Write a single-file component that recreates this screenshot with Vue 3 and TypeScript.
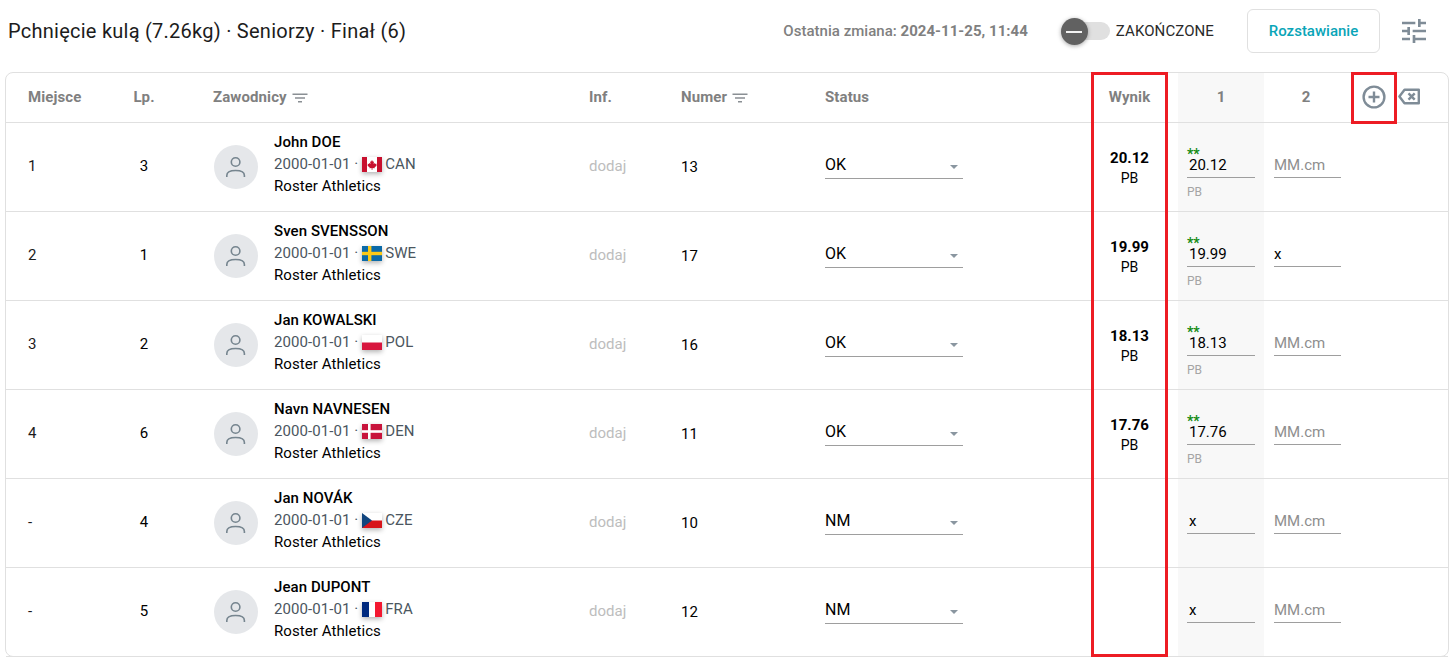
<script setup lang="ts">
interface Row {
  place: string; lp: number; first: string; last: string; flag: string; country: string;
  num: number; status: string; result: string; a1: string; stars: boolean; a2: string;
}
const rows: Row[] = [
  { place: '1', lp: 3, first: 'John', last: 'DOE', flag: 'can', country: 'CAN', num: 13, status: 'OK', result: '20.12', a1: '20.12', stars: true, a2: '' },
  { place: '2', lp: 1, first: 'Sven', last: 'SVENSSON', flag: 'swe', country: 'SWE', num: 17, status: 'OK', result: '19.99', a1: '19.99', stars: true, a2: 'x' },
  { place: '3', lp: 2, first: 'Jan', last: 'KOWALSKI', flag: 'pol', country: 'POL', num: 16, status: 'OK', result: '18.13', a1: '18.13', stars: true, a2: '' },
  { place: '4', lp: 6, first: 'Navn', last: 'NAVNESEN', flag: 'den', country: 'DEN', num: 11, status: 'OK', result: '17.76', a1: '17.76', stars: true, a2: '' },
  { place: '-', lp: 4, first: 'Jan', last: 'NOVÁK', flag: 'cze', country: 'CZE', num: 10, status: 'NM', result: '', a1: 'x', stars: false, a2: '' },
  { place: '-', lp: 5, first: 'Jean', last: 'DUPONT', flag: 'fra', country: 'FRA', num: 12, status: 'NM', result: '', a1: 'x', stars: false, a2: '' },
];
</script>

<template>
  <div class="page">
    <header class="top">
      <h1 class="title">Pchnięcie kulą (7.26kg) · Seniorzy · Finał (6)</h1>
      <div class="changed">Ostatnia zmiana: <b>2024-11-25, 11:44</b></div>
      <div class="toggle">
        <span class="track"></span>
        <span class="knob"><span class="minus"></span></span>
      </div>
      <span class="toggle-label">ZAKOŃCZONE</span>
      <button class="seed" type="button">Rozstawianie</button>
      <svg class="tune" viewBox="0 0 24 24" width="32" height="32" fill="#7f8c97">
        <path d="M3 17v2h6v-2H3zM3 5v2h10V5H3zm10 16v-2h8v-2h-8v-2h-2v6h2zM7 9v2H3v2h4v2h2V9H7zm14 4v-2H11v2h10zm-6-4h2V7h4V5h-4V3h-2v6z" />
      </svg>
    </header>

    <section class="card">
      <div class="row head">
        <div class="c-place">Miejsce</div>
        <div class="c-lp">Lp.</div>
        <div class="c-ath">
          <span>Zawodnicy</span>
          <svg class="filter" viewBox="0 0 16 10" width="16" height="10" fill="none" stroke="#8a8f94" stroke-width="1.4"><path d="M0.5 1.2h15M3 5h10M6 8.8h4" /></svg>
        </div>
        <div class="c-inf">Inf.</div>
        <div class="c-num">
          <span>Numer</span>
          <svg class="filter" viewBox="0 0 16 10" width="16" height="10" fill="none" stroke="#8a8f94" stroke-width="1.4"><path d="M0.5 1.2h15M3 5h10M6 8.8h4" /></svg>
        </div>
        <div class="c-status">Status</div>
        <div class="c-res">Wynik</div>
        <div class="c-gap"></div>
        <div class="c-try shade">1</div>
        <div class="c-try two">2</div>
        <div class="c-act">
          <svg class="plus" viewBox="0 0 24 24" width="24" height="24" fill="none" stroke="#7f8c97" stroke-width="2.4"><circle cx="12" cy="12" r="10.4" /><path d="M12 6.5v11M6.5 12h11" /></svg>
          <svg class="erase" viewBox="0 0 22 16" width="22" height="17" fill="none" stroke="#7f8c97" stroke-width="2.4"><path d="M6.5 1.2H20.8V14.8H6.5L1.4 8z" stroke-linejoin="round" /><path d="M10.5 4.8l6.2 6.4M16.7 4.8l-6.2 6.4" /></svg>
        </div>
      </div>

      <div v-for="r in rows" :key="r.lp" class="row body">
        <div class="c-place">{{ r.place }}</div>
        <div class="c-lp">{{ r.lp }}</div>
        <div class="c-ath person">
          <span class="avatar">
            <svg viewBox="0 0 24 24" width="24" height="24" fill="none" stroke="#76858f" stroke-width="1.6">
              <circle cx="11.6" cy="7" r="4.3" />
              <path d="M2.8 22v-1.6c0-3 3.4-4.9 8.8-4.9s8.8 1.9 8.8 4.9V22" />
            </svg>
          </span>
          <div class="who">
            <div class="name">{{ r.first }} {{ r.last }}</div>
            <div class="dob">
              <span>2000-01-01 ·</span>
              <svg class="flag" viewBox="0 0 20 15" width="20" height="15">
                <template v-if="r.flag === 'can'">
                  <rect width="20" height="15" fill="#fff" /><rect width="5" height="15" fill="#c8102e" /><rect x="15" width="5" height="15" fill="#c8102e" />
                  <path d="M10 3l1 1.8 1-.4-.4 2.6 1.4-1 .4 1 1.3-.2-.5 1.5.6.4-2.2 1.6.2 1-2.3-.3v1.7h-.9V11l-2.2.3.2-1-2.3-1.6.7-.4-.5-1.5 1.3.2.4-1 1.4 1L8 4.4l1 .4z" fill="#c8102e" />
                </template>
                <template v-else-if="r.flag === 'swe'">
                  <rect width="20" height="15" fill="#0b6aa8" /><rect x="6" width="3.4" height="15" fill="#fcc916" /><rect y="5.8" width="20" height="3.4" fill="#fcc916" />
                </template>
                <template v-else-if="r.flag === 'pol'">
                  <rect width="20" height="15" fill="#fff" /><rect y="7.5" width="20" height="7.5" fill="#d8163e" />
                </template>
                <template v-else-if="r.flag === 'den'">
                  <rect width="20" height="15" fill="#c8143c" /><rect x="6" width="2.6" height="15" fill="#fff" /><rect y="6.2" width="20" height="2.6" fill="#fff" />
                </template>
                <template v-else-if="r.flag === 'cze'">
                  <rect width="20" height="15" fill="#fff" /><rect y="7.5" width="20" height="7.5" fill="#d7141a" /><path d="M0 0l10 7.5L0 15z" fill="#11457e" />
                </template>
                <template v-else>
                  <rect width="20" height="15" fill="#fff" /><rect width="7" height="15" fill="#002a7f" /><rect x="13" width="7" height="15" fill="#f31830" />
                </template>
              </svg>
              <span>{{ r.country }}</span>
            </div>
            <div class="team">Roster Athletics</div>
          </div>
        </div>
        <div class="c-inf add">dodaj</div>
        <div class="c-num val">{{ r.num }}</div>
        <div class="c-status">
          <div class="select">
            <span>{{ r.status }}</span>
            <span class="caret"></span>
          </div>
        </div>
        <div class="c-res result">
          <template v-if="r.result">
            <strong>{{ r.result }}</strong>
            <span>PB</span>
          </template>
        </div>
        <div class="c-gap"></div>
        <div class="c-try shade attempt">
          <div class="field">
            <span class="value">{{ r.a1 }}</span>
          </div>
          <span v-if="r.stars" class="stars">**</span>
          <span v-if="r.stars" class="note">PB</span>
        </div>
        <div class="c-try attempt">
          <div class="field second">
            <span class="value" :class="{ hint: !r.a2 }">{{ r.a2 || 'MM.cm' }}</span>
          </div>
        </div>
        <div class="c-act"></div>
      </div>

      <div class="mark mark-result"></div>
      <div class="mark mark-plus"></div>
    </section>
  </div>
</template>

<style scoped>
.page {
  width: 1455px;
  height: 664px;
  box-sizing: border-box;
  padding: 0 6px 0 5px;
  font-family: Roboto, "Liberation Sans", sans-serif;
  color: #000;
  background: #fff;
  overflow: hidden;
}
.top {
  height: 72px;
  display: flex;
  align-items: center;
  padding: 0 0 10px 3px;
  box-sizing: border-box;
}
.title {
  margin: 0;
  flex: 1;
  font-size: 20px;
  font-weight: 400;
  letter-spacing: 0.25px;
  color: #1c1c1c;
}
.changed {
  font-size: 15px;
  font-weight: 500;
  letter-spacing: 0.03px;
  color: #808080;
  margin-right: 33px;
}
.changed b { font-weight: 700; }
.toggle {
  position: relative;
  width: 49px;
  height: 28px;
  margin-right: 6px;
}
.track {
  position: absolute;
  left: 6px;
  right: 0;
  top: 5px;
  height: 18px;
  border-radius: 9px;
  background: #e0e0e0;
}
.knob {
  position: absolute;
  left: 0;
  top: 1px;
  width: 27px;
  height: 27px;
  border-radius: 50%;
  background: #616161;
  box-shadow: 0 1px 4px rgba(0, 0, 0, 0.35);
  display: flex;
  align-items: center;
  justify-content: center;
}
.minus { width: 16px; height: 2px; background: #f2f2f2; }
.toggle-label {
  font-size: 15px;
  letter-spacing: 0.1px;
  color: #2a2a2a;
  margin-right: 33px;
}
.seed {
  width: 133px;
  height: 44px;
  border: 1px solid #e0e0e0;
  border-radius: 6px;
  background: #fff;
  color: #0aa5b8;
  font: 500 15px Roboto, sans-serif;
  margin-right: 18px;
  padding: 0;
}
.tune { margin-right: 19px; }

.card {
  position: relative;
  width: 1444px;
  height: 585px;
  box-sizing: border-box;
  border: 1px solid #e0e0e0;
  border-radius: 8px;
}
.row {
  display: grid;
  grid-template-columns: 107px 62px 414px 92px 144px 267px 75px 11px 86px 86px 1fr;
  border-bottom: 1px solid #e0e0e0;
  box-sizing: border-box;
  font-size: 15px;
}
.row > div { display: flex; align-items: center; min-width: 0; }
.row:last-of-type { border-bottom: 0; }
.head {
  height: 50px;
  font-weight: 700;
  letter-spacing: 0.1px;
  color: #808080;
}
.head > div { padding-bottom: 2px; box-sizing: border-box; }
.head > .two { padding-right: 2px; }
.body { height: 89px; }
.body > .c-place, .body > .c-lp, .body > .add { padding-bottom: 3px; box-sizing: border-box; }
.body > .val { padding-bottom: 1px; box-sizing: border-box; }
.c-place { padding-left: 22px; color: #1b1b1b; }
.head .c-place { color: #808080; }
.row > .c-lp, .row > .c-res, .row > .c-try { justify-content: center; }
.c-ath { padding-left: 38px; }
.filter { margin-left: 5px; margin-top: 2px; }
.row > .person { gap: 16px; padding-left: 39px; }
.avatar {
  width: 44px;
  height: 44px;
  flex: none;
  border-radius: 50%;
  background: #e5e7ea;
  display: flex;
  align-items: center;
  justify-content: center;
}
.who { line-height: 22px; margin-top: -7px; letter-spacing: 0.07px; }
.name { font-weight: 500; }
.dob { color: #4b5660; display: flex; align-items: center; }
.flag {
  margin: 2px 3px 0 4px;
  box-shadow: 0 2px 5px rgba(0, 0, 0, 0.3);
}
.add { color: #bdbdbd; }
.select {
  width: 138px;
  height: 28px;
  margin-top: -5px;
  box-sizing: border-box;
  border-bottom: 1px solid #9e9e9e;
  display: flex;
  justify-content: space-between;
  align-items: center;
  font-size: 16px;
  padding-right: 5px;
}
.caret {
  width: 0;
  height: 0;
  margin-top: 6px;
  border-left: 4px solid transparent;
  border-right: 4px solid transparent;
  border-top: 4px solid #8a96a0;
}
.row > .result {
  flex-direction: column;
  gap: 3px;
  padding-top: 3px;
  line-height: 17px;
}
.result strong { font-weight: 700; font-size: 15px; }
.result span { font-size: 14px; }
.shade { background: #f8f8f8; }
.row > .attempt {
  position: relative;
  display: block;
}
.field {
  position: absolute;
  left: 9px;
  top: 27px;
  width: 68px;
  height: 28px;
  box-sizing: border-box;
  border-bottom: 1px solid #9e9e9e;
  padding: 6px 0 0 2px;
  line-height: 18px;
}
.field.second { left: 10px; width: 67px; padding-left: 0; }
.stars {
  position: absolute;
  left: 9px;
  top: 24px;
  color: #128a12;
  font-size: 14px;
  line-height: 14px;
  font-weight: 700;
}
.hint { color: #8e8e8e; }
.note {
  position: absolute;
  left: 9px;
  top: 62px;
  font-size: 12px;
  line-height: 14px;
  color: #a5a5a5;
}
.head .c-try { color: #808080; }
.row > .c-act { gap: 12px; padding-left: 12px; }
.mark {
  position: absolute;
  box-sizing: border-box;
  border: 3px solid #ed1c24;
  pointer-events: none;
}
.mark-result { left: 1085px; top: -1px; width: 77px; height: 585px; }
.mark-plus { left: 1345px; top: -1px; width: 46px; height: 52px; }
</style>
